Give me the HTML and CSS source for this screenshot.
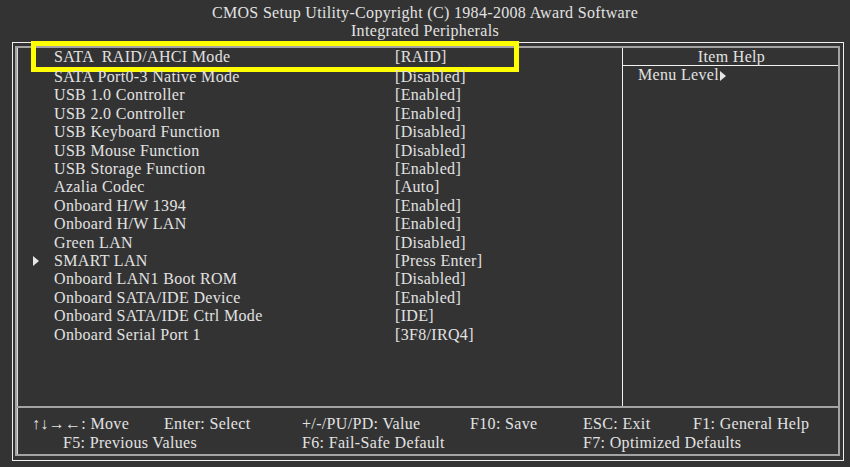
FILE: index.html
```html
<!DOCTYPE html>
<html lang="en">
<head>
  <meta charset="UTF-8">
  <title>CMOS Setup Utility - Integrated Peripherals</title>
  <link rel="stylesheet" href="styles.css">
</head>
<body>
  <header class="title">
    <div>CMOS Setup Utility-Copyright (C) 1984-2008 Award Software</div>
    <div>Integrated Peripherals</div>
  </header>

  <div class="frame">
    <!-- zvyraznena polozka -->
    <div class="highlight"></div>

    <div class="inner">
      <div class="main">
        <ul class="items">
          <li class="current"><span class="label">SATA  RAID/AHCI Mode</span><span class="value">[RAID]</span></li>
          <li><span class="label">SATA Port0-3 Native Mode</span><span class="value">[Disabled]</span></li>
          <li><span class="label">USB 1.0 Controller</span><span class="value">[Enabled]</span></li>
          <li><span class="label">USB 2.0 Controller</span><span class="value">[Enabled]</span></li>
          <li><span class="label">USB Keyboard Function</span><span class="value">[Disabled]</span></li>
          <li><span class="label">USB Mouse Function</span><span class="value">[Disabled]</span></li>
          <li><span class="label">USB Storage Function</span><span class="value">[Enabled]</span></li>
          <li><span class="label">Azalia Codec</span><span class="value">[Auto]</span></li>
          <li><span class="label">Onboard H/W 1394</span><span class="value">[Enabled]</span></li>
          <li><span class="label">Onboard H/W LAN</span><span class="value">[Enabled]</span></li>
          <li><span class="label">Green LAN</span><span class="value">[Disabled]</span></li>
          <li class="submenu"><svg class="arrow" width="6" height="10" viewBox="0 0 6 10"><path d="M0 0 L6 5 L0 10 Z" fill="#e6e6e6"/></svg><span class="label">SMART LAN</span><span class="value">[Press Enter]</span></li>
          <li><span class="label">Onboard LAN1 Boot ROM</span><span class="value">[Disabled]</span></li>
          <li><span class="label">Onboard SATA/IDE Device</span><span class="value">[Enabled]</span></li>
          <li><span class="label">Onboard SATA/IDE Ctrl Mode</span><span class="value">[IDE]</span></li>
          <li><span class="label">Onboard Serial Port 1</span><span class="value">[3F8/IRQ4]</span></li>
        </ul>

        <aside class="help">
          <div class="help-head">Item Help</div>
          <div class="help-body">Menu Level<svg class="level-arrow" width="6" height="10" viewBox="0 0 6 10"><path d="M0 0 L6 5 L0 10 Z" fill="#e6e6e6"/></svg></div>
        </aside>
      </div>

      <footer class="keys">
        <span>↑↓→←: Move</span>
        <span>Enter: Select</span>
        <span>+/-/PU/PD: Value</span>
        <span>F10: Save</span>
        <span>ESC: Exit</span>
        <span>F1: General Help</span>
        <span class="f5">F5: Previous Values</span>
        <span class="f6">F6: Fail-Safe Default</span>
        <span class="f7">F7: Optimized Defaults</span>
      </footer>
    </div>
  </div>
</body>
</html>
```

FILE: styles.css
```css
body {
  margin: 0;
  background-color: #333333; /* tmave sede pozadi BIOSu */
  color: #e2e2e2;
  font-family: "Liberation Serif", "Times New Roman", serif;
  font-size: 16px;
  letter-spacing: 0.33px;
}
.title {
  box-sizing: border-box;
  height: 42px;
  padding-top: 4px;
  text-align: center;
  line-height: 18.4px;
}
.frame {
  position: relative;
  box-sizing: border-box;
  margin-left: 12px;
  width: 832px;
  height: 419px;
  border: 1px solid #efefef;
  padding: 3px 3px 4px 2px;
}
.highlight {
  position: absolute;
  left: 18px;
  top: -2px;
  width: 488px;
  height: 31px;
  box-sizing: border-box;
  border: 5px solid #ffff00;
}
.inner {
  box-sizing: border-box;
  height: 100%;
  border: 2px solid #a4a4a4;
  box-shadow: inset 1px 0 0 #d8d8d8;
  display: flex;
  flex-direction: column;
}
.main {
  display: flex;
  height: 358px;
  border-bottom: 2px solid #a4a4a4;
}
.items {
  list-style: none;
  margin: -2px 0 0 0;
  padding: 0 0 0 37px;
  width: 605px;
  box-sizing: border-box;
  line-height: 18.4px;
}
.items li {
  display: flex;
  align-items: center;
  position: relative;
  white-space: pre;
}
.items li.current {
  line-height: 22px;
}
.items .label {
  width: 341px;
}
.arrow {
  position: absolute;
  left: -21px;
  top: 4px;
}
.help {
  flex: 1;
  border-left: 1px solid #f2f2f2;
}
.help-head {
  height: 17px;
  line-height: 17px;
  text-align: center;
  border-bottom: 1px solid #f2f2f2;
  padding-left: 2px;
}
.help-body {
  padding-left: 15px;
  line-height: 18px;
}
.level-arrow {
  vertical-align: -1px;
  margin-left: 1px;
}
.keys {
  display: grid;
  grid-template-columns: 132px 138px 168px 113px 110px 1fr;
  padding: 6px 0 0 15px;
  line-height: 19px;
}
.keys .f5 {
  grid-column: 1 / span 2;
  padding-left: 31px;
}
.keys .f6 {
  grid-column: 3 / span 2;
}
.keys .f7 {
  grid-column: 5 / span 2;
}
```
